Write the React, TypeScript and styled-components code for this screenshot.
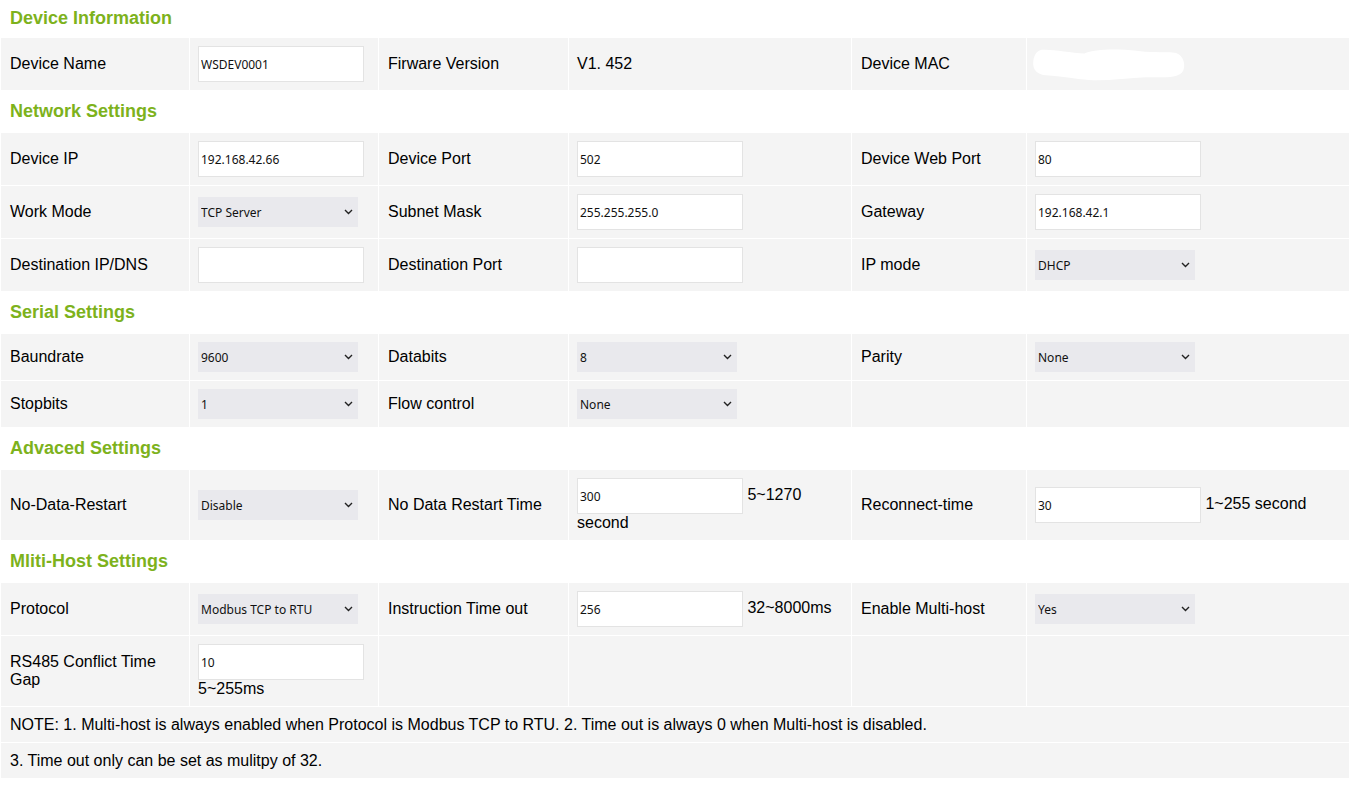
import { FC, ReactNode } from 'react'
import styled, { createGlobalStyle } from 'styled-components'

const GlobalStyle = createGlobalStyle`
  body {
    margin: 0;
    background: #fff;
    font-family: "Liberation Sans", Arial, sans-serif;
    font-size: 16px;
    color: #000;
  }
`

const Sheet = styled.div`
  display: grid;
  grid-template-columns: 188px 188px 189px 282px 174px 322px;
  gap: 1px;
  padding-left: 1px;
  width: 1348px;
`

const Heading = styled.div<{ $first?: boolean }>`
  grid-column: 1 / -1;
  height: ${({ $first }) => ($first ? '37px' : '41px')};
  display: flex;
  align-items: center;
  padding-left: 9px;
  font-size: 18px;
  font-weight: bold;
  color: #7db21c;
  background: #fff;
`

const Label = styled.div`
  display: flex;
  align-items: center;
  padding: 8px 8px 8px 9px;
  background: #f4f4f4;
  line-height: 1.15;
`

const Value = styled.div`
  display: flex;
  align-items: center;
  padding: 8px;
  background: #f4f4f4;
  position: relative;
`

const Field = styled.div`
  line-height: 18px;
`

const TextInput = styled.input`
  box-sizing: border-box;
  width: 166px;
  height: 36px;
  padding: 0 2px;
  border: 1px solid #e3e3e3;
  background: #fff;
  font-family: "Noto Sans", sans-serif;
  font-size: 12px;
  color: #111;
  outline: none;
  vertical-align: middle;
`

const SelectWrap = styled.div`
  position: relative;
  width: 160px;
  height: 30px;
`

const Select = styled.select`
  appearance: none;
  width: 160px;
  height: 30px;
  border: none;
  border-radius: 0;
  padding: 0 0 0 3px;
  background: #e9e9ed;
  font-family: "Noto Sans", sans-serif;
  font-size: 12px;
  color: #111;
  outline: none;
`

const Chevron = styled.svg`
  position: absolute;
  right: 5px;
  top: 12px;
  pointer-events: none;
`

const Note = styled.div`
  grid-column: 1 / -1;
  height: 35px;
  box-sizing: border-box;
  display: flex;
  align-items: center;
  padding: 0 9px;
  background: #f4f4f4;
`

const Redacted = styled.svg`
  display: block;
  margin-left: -5px;
`

const Dropdown: FC<{ value: string }> = ({ value }) => (
  <SelectWrap>
    <Select defaultValue={value}>
      <option>{value}</option>
    </Select>
    <Chevron width="9" height="6" viewBox="0 0 9 6">
      <polyline points="1,1 4.5,4.5 8,1" fill="none" stroke="#222" strokeWidth="1.4" />
    </Chevron>
  </SelectWrap>
)

const Input: FC<{ value?: string; after?: ReactNode }> = ({ value = '', after }) => (
  <Field>
    <TextInput defaultValue={value} />
    {after && <> {after}</>}
  </Field>
)

const Empty = () => <Value />

export default function App() {
  return (
    <>
      <GlobalStyle />
      <Sheet>
        <Heading $first>Device Information</Heading>
        <Label>Device Name</Label>
        <Value><Input value="WSDEV0001" /></Value>
        <Label>Firware Version</Label>
        <Value>V1. 452</Value>
        <Label>Device MAC</Label>
        <Value>
          <Redacted width="160" height="36" viewBox="0 0 164 38">
            <path
              d="M10 4 C20 3 40 7 55 8 C65 3 90 3 110 5 C120 7 140 6 150 7 C160 8 163 22 158 28 C152 34 140 33 120 33 C100 34 80 37 60 36 C45 35 30 32 15 31 C5 30 0 25 1 16 C2 9 5 5 10 4 Z"
              fill="#fff"
            />
          </Redacted>
        </Value>

        <Heading>Network Settings</Heading>
        <Label>Device IP</Label>
        <Value><Input value="192.168.42.66" /></Value>
        <Label>Device Port</Label>
        <Value><Input value="502" /></Value>
        <Label>Device Web Port</Label>
        <Value><Input value="80" /></Value>

        <Label>Work Mode</Label>
        <Value><Dropdown value="TCP Server" /></Value>
        <Label>Subnet Mask</Label>
        <Value><Input value="255.255.255.0" /></Value>
        <Label>Gateway</Label>
        <Value><Input value="192.168.42.1" /></Value>

        <Label>Destination IP/DNS</Label>
        <Value><Input /></Value>
        <Label>Destination Port</Label>
        <Value><Input /></Value>
        <Label>IP mode</Label>
        <Value><Dropdown value="DHCP" /></Value>

        <Heading>Serial Settings</Heading>
        <Label>Baundrate</Label>
        <Value><Dropdown value="9600" /></Value>
        <Label>Databits</Label>
        <Value><Dropdown value="8" /></Value>
        <Label>Parity</Label>
        <Value><Dropdown value="None" /></Value>

        <Label>Stopbits</Label>
        <Value><Dropdown value="1" /></Value>
        <Label>Flow control</Label>
        <Value><Dropdown value="None" /></Value>
        <Empty />
        <Empty />

        <Heading>Advaced Settings</Heading>
        <Label>No-Data-Restart</Label>
        <Value><Dropdown value="Disable" /></Value>
        <Label>No Data Restart Time</Label>
        <Value><Input value="300" after="5~1270 second" /></Value>
        <Label>Reconnect-time</Label>
        <Value><Input value="30" after="1~255 second" /></Value>

        <Heading>Mliti-Host Settings</Heading>
        <Label>Protocol</Label>
        <Value><Dropdown value="Modbus TCP to RTU" /></Value>
        <Label>Instruction Time out</Label>
        <Value><Input value="256" after="32~8000ms" /></Value>
        <Label>Enable Multi-host</Label>
        <Value><Dropdown value="Yes" /></Value>

        <Label>RS485 Conflict Time Gap</Label>
        <Value><Input value="10" after="5~255ms" /></Value>
        <Empty />
        <Empty />
        <Empty />
        <Empty />

        <Note>NOTE: 1. Multi-host is always enabled when Protocol is Modbus TCP to RTU. 2. Time out is always 0 when Multi-host is disabled.</Note>
        <Note>3. Time out only can be set as mulitpy of 32.</Note>
      </Sheet>
    </>
  )
}
